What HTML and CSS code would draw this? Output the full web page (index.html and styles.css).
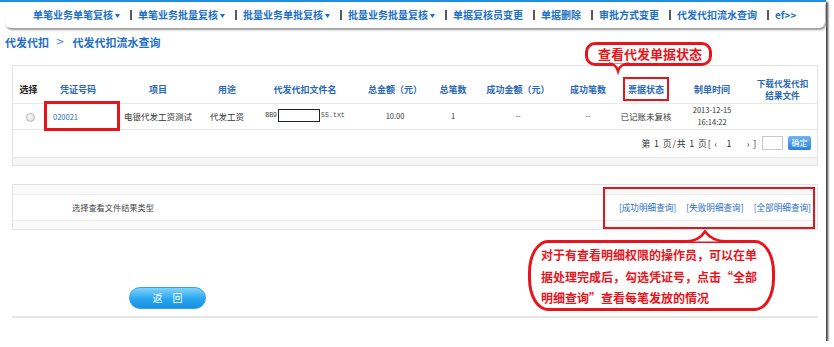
FILE: index.html
```html
<!DOCTYPE html>
<html lang="zh-CN">
<head>
<meta charset="utf-8">
<title>代发代扣流水查询</title>
<link rel="stylesheet" href="styles.css">
</head>
<body>
<div class="frame">
  <div class="topline"></div>
  <div class="nav">
    <a class="nav-item">单笔业务单笔复核<svg class="caret" width="5" height="4" viewBox="0 0 5 4"><path d="M0 0H5L2.5 4Z" fill="#1d6fc4"/></svg></a><span class="sep"></span>
    <a class="nav-item">单笔业务批量复核<svg class="caret" width="5" height="4" viewBox="0 0 5 4"><path d="M0 0H5L2.5 4Z" fill="#1d6fc4"/></svg></a><span class="sep"></span>
    <a class="nav-item">批量业务单批复核<svg class="caret" width="5" height="4" viewBox="0 0 5 4"><path d="M0 0H5L2.5 4Z" fill="#1d6fc4"/></svg></a><span class="sep"></span>
    <a class="nav-item">批量业务批量复核<svg class="caret" width="5" height="4" viewBox="0 0 5 4"><path d="M0 0H5L2.5 4Z" fill="#1d6fc4"/></svg></a><span class="sep"></span>
    <a class="nav-item">单据复核员变更</a><span class="sep"></span>
    <a class="nav-item">单据删除</a><span class="sep"></span>
    <a class="nav-item">审批方式变更</a><span class="sep"></span>
    <a class="nav-item">代发代扣流水查询</a><span class="sep"></span>
    <a class="nav-item">ef&gt;&gt;</a>
  </div>

  <div class="crumb"><span>代发代扣</span><span class="gt">&gt;</span><span>代发代扣流水查询</span></div>

  <div class="panel list">
    <table class="grid">
      <colgroup>
        <col style="width:31px"><col style="width:68px"><col style="width:92px"><col style="width:46px">
        <col style="width:110px"><col style="width:70px"><col style="width:46px"><col style="width:84px">
        <col style="width:56px"><col style="width:60px"><col style="width:72px"><col style="width:69px">
      </colgroup>
      <thead>
        <tr>
          <th class="plain">选择</th>
          <th>凭证号码</th>
          <th>项目</th>
          <th>用途</th>
          <th>代发代扣文件名</th>
          <th>总金额（元）</th>
          <th>总笔数</th>
          <th>成功金额（元）</th>
          <th>成功笔数</th>
          <th>票据状态</th>
          <th>制单时间</th>
          <th class="two"><span class="ln">下载代发代扣</span><span class="ln">结果文件</span></th>
        </tr>
      </thead>
      <tbody>
        <tr>
          <td><span class="radio"></span></td>
          <td class="voucher"><a>020021</a></td>
          <td>电银代发工资测试</td>
          <td>代发工资</td>
          <td class="file">BB9<span class="mask"></span>55.txt</td>
          <td class="num">10.00</td>
          <td class="num">1</td>
          <td class="num">--</td>
          <td class="num">--</td>
          <td>已记账未复核</td>
          <td class="num date"><span class="ln">2013-12-15</span><span class="ln">16:14:22</span></td>
          <td></td>
        </tr>
      </tbody>
    </table>
    <div class="pager">
      <span class="pager-text">第 1 页/共 1 页[ ‹ &nbsp;&nbsp;1 &nbsp;&nbsp;&nbsp;&nbsp;› ]</span>
      <span class="pager-input"></span>
      <span class="pager-btn">确定</span>
    </div>
    <div class="strip"></div>
  </div>

  <div class="panel filter">
    <div class="strip top"></div>
    <div class="filter-row">
      <span class="filter-label">选择查看文件结果类型</span>
      <div class="links">
        <a>[成功明细查询]</a>
        <a>[失败明细查询]</a>
        <a>[全部明细查询]</a>
      </div>
    </div>
    <div class="strip bottom"></div>
  </div>

  <div class="actions"><span class="back-btn">返 回</span></div>
  <div class="rule"></div>

  <!-- annotations -->
  <div class="mark mark-voucher"></div>
  <div class="mark mark-status"></div>
  <div class="mark mark-links"></div>

  <div class="bubble bubble-status">查看代发单据状态</div>
  <svg class="tail tail-status" width="20" height="10" viewBox="0 0 20 10">
    <path d="M0 1.5 Q7 2 9 9 Q11 2 20 1.5" fill="#fff" stroke="none"/>
    <path d="M0 1.5 Q7 2 9 9 Q11 2 20 1.5" fill="none" stroke="#e8141c" stroke-width="2.6"/>
  </svg>

  <div class="bubble bubble-detail">对于有查看明细权限的操作员，可以在单<br>据处理完成后，勾选凭证号，点击“全部<br>明细查询”查看每笔发放的情况</div>
  <svg class="tail tail-detail" width="40" height="13" viewBox="0 0 40 13">
    <path d="M0 11.5 Q13 11 19 1.5 Q26 11 40 11.5" fill="#fff" stroke="none"/>
    <path d="M0 11.5 Q13 11 19 1.5 Q26 11 40 11.5" fill="none" stroke="#e8141c" stroke-width="2.6"/>
  </svg>
</div>
</body>
</html>
```

FILE: styles.css
```css
* { box-sizing: border-box; }

html, body {
  margin: 0;
  padding: 0;
  background: #ffffff;
}

body {
  font-family: "Noto Sans CJK SC", "Noto Sans", sans-serif;
  color: #333;
}

.frame {
  position: relative;
  width: 826px;
  height: 341px;
  background: #fff;
  box-shadow: 2px 2px 2px #3a3a3a;
}

.topline {
  height: 2px;
  background: #1f8fe6;
}

.nav {
  display: flex;
  align-items: center;
  height: 26px;
  margin: 0 1px 0 5px;
  padding-left: 28px;
  background: #fff;
  border-radius: 0 0 6px 6px;
  box-shadow: 1px 2px 2px #9a9a9a;
  font-size: 10px;
  font-weight: bold;
  line-height: 14px;
}

.nav-item {
  color: #1d6fc4;
  display: inline-flex;
  align-items: center;
  white-space: nowrap;
}

.caret {
  margin-left: 2px;
  margin-top: 1px;
}

.sep {
  width: 2px;
  height: 10px;
  background: #5a5a5a;
  margin: 0 6px 0 10px;
}

.crumb {
  margin: 6px 0 0 5px;
  height: 16px;
  display: flex;
  align-items: center;
  font-size: 11px;
  font-weight: bold;
  color: #1d6fc4;
  line-height: 16px;
}

.crumb .gt {
  font-family: "DejaVu Sans", sans-serif;
  font-weight: normal;
  color: #4a7fbf;
  margin: 0 8px 0 7px;
  font-size: 10px;
}

.panel {
  margin: 0 8px 0 12px;
  border: 1px solid #e2e2e2;
}

.list {
  margin-top: 15px;
  padding-top: 10px;
}

.grid {
  width: 100%;
  border-collapse: collapse;
  table-layout: fixed;
}

.grid th {
  height: 27px;
  padding: 0;
  font-size: 9px;
  font-weight: bold;
  color: #2a68b3;
  text-align: center;
  vertical-align: middle;
  line-height: 11px;
  border-bottom: 1px solid #e8e8e8;
  white-space: nowrap;
}

.grid th.plain { color: #222; }

.grid th.two {
  font-size: 8.6px;
}

.ln {
  display: block;
  height: 12.5px;
  line-height: 12.5px;
}

.grid td {
  height: 26px;
  padding: 0;
  font-size: 8.5px;
  text-align: center;
  vertical-align: middle;
  color: #333;
  line-height: 12px;
  border-bottom: 1px solid #e8e8e8;
  white-space: nowrap;
}

.radio {
  display: inline-block;
  width: 9px;
  height: 9px;
  border-radius: 50%;
  border: 1px solid #b8b8b8;
  background: radial-gradient(circle at 40% 35%, #fafafa, #dcdcdc);
  vertical-align: middle;
  margin-left: 4px;
}

.grid td.voucher {
  text-align: left;
  padding-left: 9px;
}

.voucher a {
  color: #2a6bbf;
  font-size: 7.5px;
}

.grid td.file {
  font-family: "Liberation Mono", monospace;
  font-size: 6.6px;
  color: #444;
}

.mask {
  display: inline-block;
  width: 42px;
  height: 13px;
  border: 1px solid #222;
  background: #fff;
  vertical-align: middle;
  margin: 0 1px;
}

.grid td.num {
  font-size: 7.5px;
}

.grid td.date {
  font-size: 7.5px;
}

.grid td.date .ln {
  height: 12px;
  line-height: 12px;
}

.pager {
  height: 28px;
  display: flex;
  align-items: center;
  justify-content: flex-end;
  padding-right: 6px;
  gap: 5px;
  border-bottom: 1px solid #e8e8e8;
}

.pager-text {
  font-size: 8.8px;
  letter-spacing: 0.9px;
  color: #333;
  white-space: nowrap;
}

.pager-input {
  width: 21px;
  height: 14px;
  border: 1px solid #c8c8c8;
  background: #fff;
}

.pager-btn {
  width: 23px;
  height: 14px;
  border-radius: 2px;
  background: linear-gradient(#6fb6f4, #2b80d8);
  color: #fff;
  font-size: 8px;
  line-height: 14px;
  text-align: center;
}

.strip {
  height: 7px;
  background: #f5f5f5;
}

.filter {
  margin-top: 18px;
}

.filter .strip.top {
  height: 10px;
  background: #fafafa;
  border-bottom: 1px solid #ececec;
}

.filter .strip.bottom {
  height: 9px;
  background: #fafafa;
  border-top: 1px solid #ececec;
}

.filter-row {
  height: 25px;
  display: flex;
  align-items: center;
  justify-content: space-between;
  padding: 0 6px 0 59px;
}

.filter-label {
  font-size: 8.2px;
  color: #444;
}

.links {
  display: flex;
  gap: 10px;
}

.links a {
  font-size: 8.6px;
  color: #2a6bbf;
  white-space: nowrap;
}

.actions {
  margin-top: 57px;
  padding-left: 129px;
  height: 22px;
}

.back-btn {
  display: block;
  width: 77px;
  height: 22px;
  border-radius: 11px;
  border: 1px solid #36a2e6;
  background: linear-gradient(#7fd3fb, #2aa6ee 55%, #1592e2);
  color: #fff;
  font-size: 10px;
  line-height: 20px;
  text-align: center;
  letter-spacing: 4px;
  text-indent: 4px;
}

.rule {
  margin: 7px 8px 0 12px;
  height: 2px;
  background: #e6e6e6;
}

/* annotations overlaying the screenshot */
.mark {
  position: absolute;
  border: 3px solid #e8141c;
}

.mark-voucher {
  left: 44px;
  top: 101px;
  width: 76px;
  height: 30px;
}

.mark-status {
  left: 623px;
  top: 77px;
  width: 46px;
  height: 24px;
  border-width: 2px;
}

.mark-links {
  left: 603px;
  top: 187px;
  width: 212px;
  height: 42px;
  border-width: 2px;
}

.bubble {
  position: absolute;
  border: 3px solid #e8141c;
  background: #fff;
  color: #e8141c;
  font-weight: bold;
}

.bubble-status {
  left: 585px;
  top: 42px;
  width: 127px;
  height: 24px;
  border-radius: 10px;
  font-size: 13px;
  line-height: 18px;
  padding-left: 10px;
  white-space: nowrap;
}

.bubble-detail {
  left: 528px;
  top: 240px;
  width: 247px;
  height: 71px;
  border-radius: 20px / 32px;
  font-size: 12px;
  line-height: 21.5px;
  padding: 1px 0 0 10px;
  white-space: nowrap;
}

.tail {
  position: absolute;
  overflow: visible;
}

.tail-status {
  left: 609px;
  top: 62px;
}

.tail-detail {
  left: 686px;
  top: 230px;
}
```
